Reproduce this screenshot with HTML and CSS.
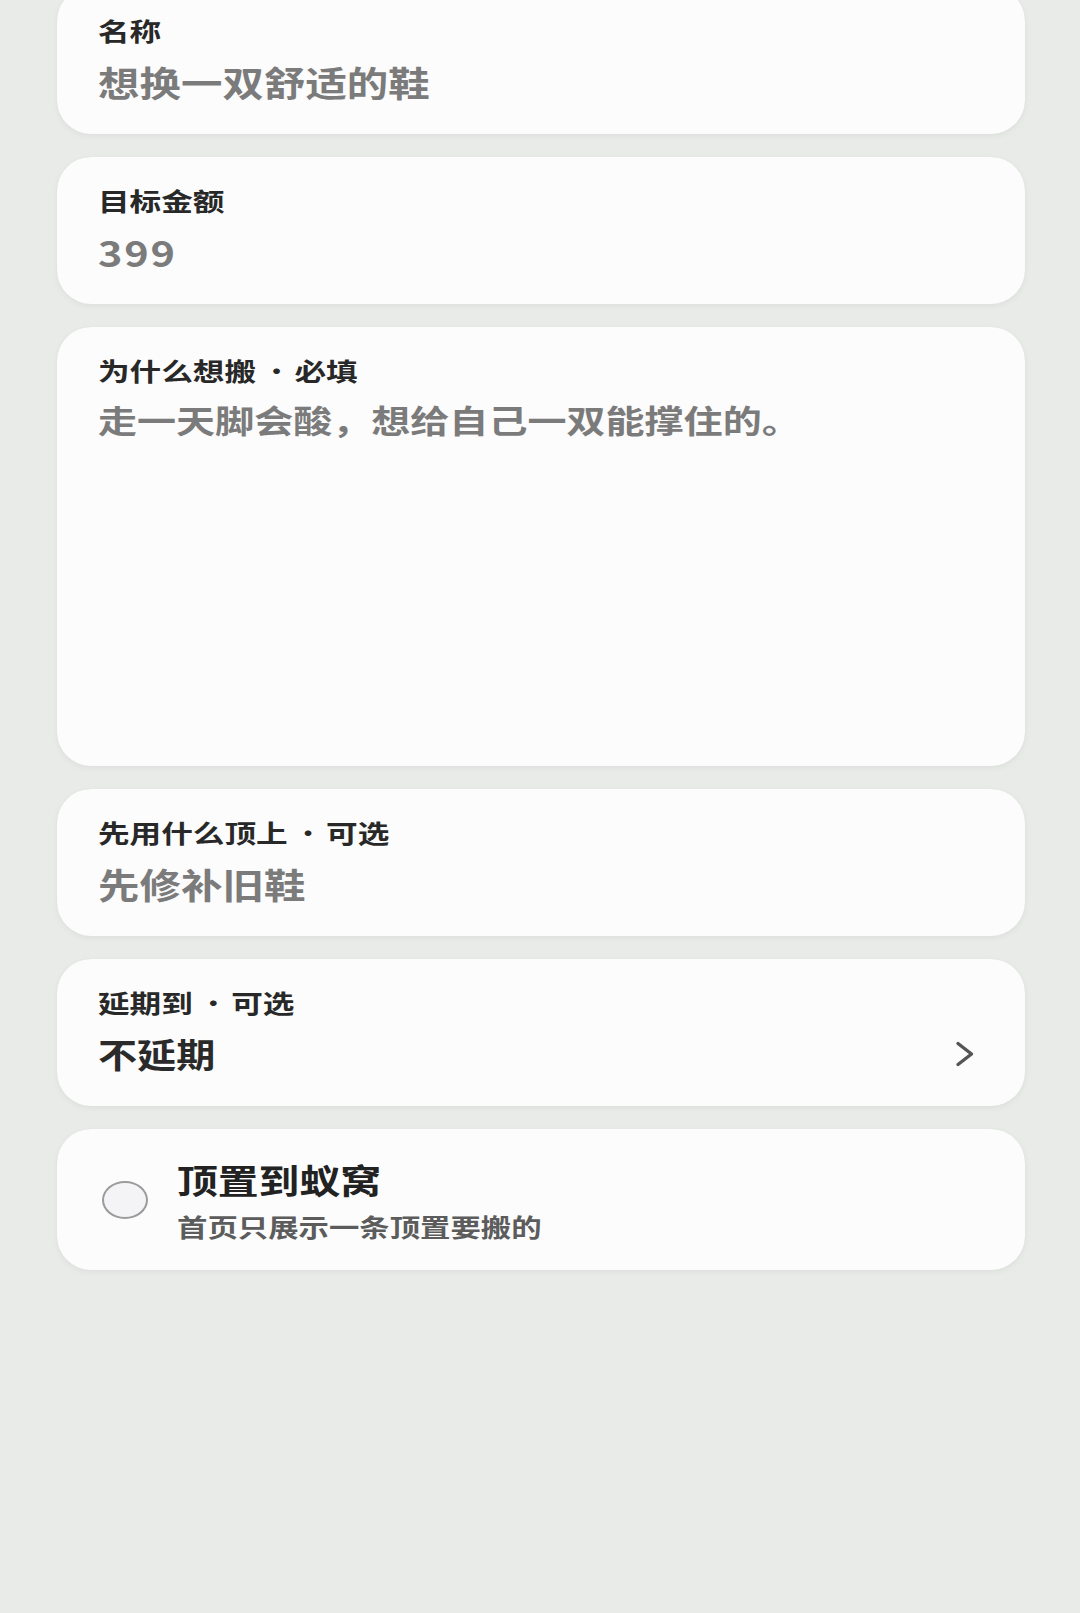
FILE: index.html
```html
<!DOCTYPE html>
<html lang="zh-CN">
<head>
<meta charset="utf-8">
<title>要搬的</title>
<link rel="stylesheet" href="styles.css">
</head>
<body>
<main class="form">
  <section class="card field">
    <div class="label">名称</div>
    <div class="value muted">想换一双舒适的鞋</div>
  </section>
  <section class="card field">
    <div class="label">目标金额</div>
    <div class="value muted num">399</div>
  </section>
  <section class="card field tall">
    <div class="label">为什么想搬<span class="sep"> · </span>必填</div>
    <div class="textarea muted">走一天脚会酸，想给自己一双能撑住的。</div>
  </section>
  <section class="card field">
    <div class="label">先用什么顶上<span class="sep"> · </span>可选</div>
    <div class="value muted">先修补旧鞋</div>
  </section>
  <section class="card field">
    <div class="label">延期到<span class="sep"> · </span>可选</div>
    <div class="value-row">
      <div class="value dark">不延期</div>
      <svg class="chevron" width="20" height="26" viewBox="0 0 20 26" aria-hidden="true">
        <polyline points="3,2.5 16.5,13 3,23.5" fill="none" stroke="#555" stroke-width="3.4" stroke-linecap="round" stroke-linejoin="round"/>
      </svg>
    </div>
  </section>
  <section class="card toggle">
    <span class="radio"></span>
    <div class="toggle-text">
      <div class="title">顶置到蚁窝</div>
      <div class="sub">首页只展示一条顶置要搬的</div>
    </div>
  </section>
</main>
</body>
</html>
```
FILE: styles.css
```css
html, body {
  margin: 0;
  padding: 0;
}
body {
  background: #e8ebe8;
  font-family: "Noto Sans CJK SC", "Noto Sans", sans-serif;
  min-height: 1613px;
}
.form {
  display: flex;
  flex-direction: column;
  gap: 23px;
  padding: 0 55px 0 57px;
  margin-top: -13px;
}
.card {
  background: #fbfcfb;
  border-radius: 34px;
  box-shadow: 0 2px 6px rgba(0, 0, 0, 0.05), 0 0 1px rgba(0, 0, 0, 0.06);
}
.field {
  display: flex;
  flex-direction: column;
  align-items: flex-start;
  padding: 26px 50px 28px 41px;
  height: 147px;
  box-sizing: border-box;
}
.field.tall {
  height: 439px;
}
/* the glyphs in this UI are drawn wide; stretch them horizontally */
.label,
.value,
.textarea,
.title,
.sub {
  white-space: nowrap;
  transform-origin: left center;
}
.label {
  font-size: 25.5px;
  line-height: 34px;
  font-weight: 700;
  color: #282828;
  transform: scaleX(1.24);
}
.sep {
  font-weight: 400;
  letter-spacing: -2px;
}
.value {
  margin-top: 11px;
  font-size: 35px;
  line-height: 48px;
  font-weight: 700;
  transform: scaleX(1.185);
}
.num {
  letter-spacing: 1.5px;
}
.muted {
  color: #7b7b7b;
}
.dark {
  color: #2a2a2a;
  font-size: 34px;
  transform: scaleX(1.15);
}
.textarea {
  margin-top: 10px;
  font-size: 32px;
  line-height: 44px;
  font-weight: 700;
  transform: scaleX(1.22);
}
.value-row {
  align-self: stretch;
  display: flex;
  align-items: center;
  justify-content: space-between;
}
.chevron {
  display: block;
  margin-top: 11px;
}
.toggle {
  height: 141px;
  box-sizing: border-box;
  display: flex;
  align-items: center;
  padding: 0 45px;
  gap: 29px;
}
.radio {
  flex: none;
  width: 46px;
  height: 38px;
  box-sizing: border-box;
  border: 2px solid #9b9b9b;
  border-radius: 50%;
  background: #f4f4f6;
}
.toggle-text {
  display: flex;
  flex-direction: column;
  align-items: flex-start;
  gap: 7px;
  padding-top: 4px;
}
.title {
  font-size: 34px;
  line-height: 44px;
  font-weight: 700;
  color: #222;
  transform: scaleX(1.2);
}
.sub {
  font-size: 24.5px;
  line-height: 36px;
  font-weight: 700;
  color: #5c5c5c;
  transform: scaleX(1.24);
}
```
